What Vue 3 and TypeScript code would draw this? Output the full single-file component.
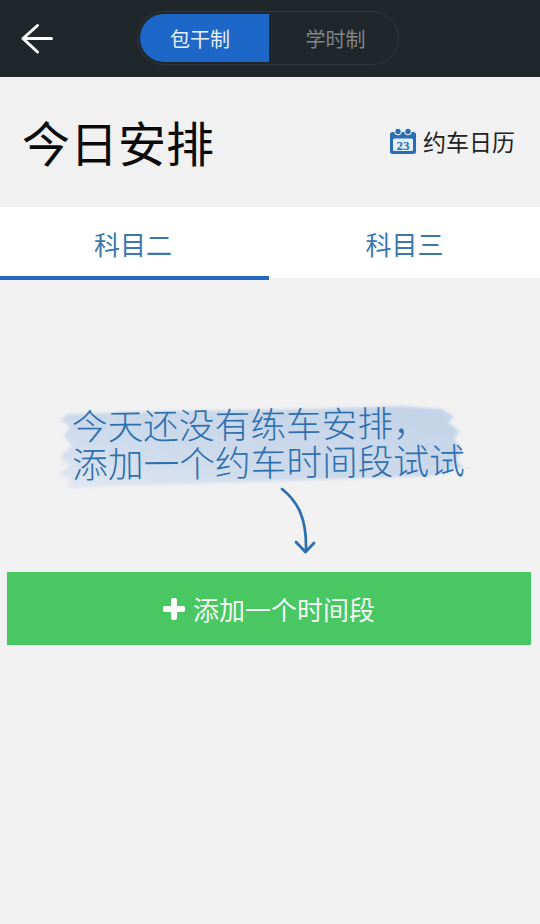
<script setup lang="ts">
import { ref } from 'vue'

const modes = ['包干制', '学时制']
const subjects = ['科目二', '科目三']
const activeMode = ref(0)
const activeSubject = ref(0)
</script>

<template>
  <div class="page">
    <header class="topbar">
      <button class="back" aria-label="返回">
        <svg width="34" height="34" viewBox="0 0 34 34" fill="none">
          <path d="M17.5 4.5 L3 17.5 L17.5 31 M3 17.5 H31.5" stroke="#fff" stroke-width="3" stroke-linecap="round" stroke-linejoin="round" />
        </svg>
      </button>
      <div class="switch">
        <button
          v-for="(m, i) in modes"
          :key="m"
          class="switch-item"
          :class="{ on: activeMode === i }"
          @click="activeMode = i"
        >{{ m }}</button>
      </div>
    </header>

    <section class="heading">
      <h1 class="title">今日安排</h1>
      <div class="calendar">
        <svg width="28" height="28" viewBox="0 0 28 28">
          <path d="M3.5 5 H24.5 a2.5 2.5 0 0 1 2.5 2.5 V24.5 a2.5 2.5 0 0 1 -2.5 2.5 H3.5 a2.5 2.5 0 0 1 -2.5 -2.5 V7.5 a2.5 2.5 0 0 1 2.5 -2.5 Z" fill="#2a6db2" />
          <rect x="4" y="11.5" width="20" height="12.5" rx="1.5" fill="#e6eff8" />
          <circle cx="9" cy="4.5" r="3.2" fill="#2a6db2" stroke="#eef3f8" stroke-width="1.1" />
          <circle cx="19" cy="4.5" r="3.2" fill="#2a6db2" stroke="#eef3f8" stroke-width="1.1" />
          <text x="14" y="22.6" text-anchor="middle" class="cal-num">23</text>
        </svg>
        <span>约车日历</span>
      </div>
    </section>

    <nav class="tabs">
      <button
        v-for="(s, i) in subjects"
        :key="s"
        class="tab"
        :class="{ on: activeSubject === i }"
        @click="activeSubject = i"
      >{{ s }}</button>
    </nav>

    <main class="empty">
      <div class="hint">
        <svg class="brush" width="430" height="92" viewBox="0 0 430 92">
          <defs>
            <filter id="soft" x="-5%" y="-15%" width="110%" height="130%">
              <feGaussianBlur stdDeviation="1.8" />
            </filter>
            <linearGradient id="wash" x1="1" y1="0" x2="0" y2="1">
              <stop offset="0" stop-color="#c3d3e7" />
              <stop offset="0.6" stop-color="#ccdaeb" />
              <stop offset="1" stop-color="#dfe7f1" />
            </linearGradient>
          </defs>
          <g filter="url(#soft)" fill="url(#wash)">
            <path d="M18 12 L120 9 L260 7 L350 4 L392 7 L404 15 L398 20 L410 30 L404 36 L412 48 L407 58 L413 66 L380 74 L200 80 L60 84 L16 86 L22 78 L9 72 L20 64 L10 54 L22 44 L14 34 L20 24 L10 18 Z" />
          </g>
          <path d="M8 20 H30 M10 62 H28 M398 66 H420" stroke="#dde5ef" stroke-width="1" fill="none" />
        </svg>
        <p class="hint-text">今天还没有练车安排，<br />添加一个约车时间段试试</p>
        <svg class="arrow" width="40" height="70" viewBox="0 0 40 70" fill="none">
          <path d="M3 2 C18 14 28 30 27 64" stroke="#2f6fae" stroke-width="2.8" stroke-linecap="round" />
          <path d="M17 55 L26.5 65 L35 56" stroke="#2f6fae" stroke-width="2.8" stroke-linecap="round" stroke-linejoin="round" />
        </svg>
      </div>
      <button class="add">
        <svg width="22" height="22" viewBox="0 0 22 22">
          <path d="M11 2.5 V19.5 M2.5 11 H19.5" stroke="#fff" stroke-width="6" stroke-linecap="round" />
        </svg>
        <span>添加一个时间段</span>
      </button>
    </main>
  </div>
</template>

<style>
html, body { margin: 0; background: #f1f1f1; }
</style>

<style scoped>
.page {
  width: 540px;
  height: 924px;
  overflow: hidden;
  display: flex;
  flex-direction: column;
  background: #f1f1f1;
  font-family: "Noto Sans CJK SC", "Noto Sans", sans-serif;
}
button {
  border: 0;
  padding: 0;
  background: none;
  font: inherit;
  cursor: pointer;
}
.topbar {
  height: 77px;
  flex: none;
  display: flex;
  align-items: center;
  background: #20272b;
  padding: 0 0 1px 20px;
  box-sizing: border-box;
}
.back {
  width: 34px;
  height: 34px;
  display: block;
  margin-right: 83px;
}
.switch {
  width: 262px;
  height: 54px;
  box-sizing: border-box;
  padding: 2px;
  display: flex;
  border: 1px solid #31383d;
  border-radius: 27px;
}
.switch-item {
  flex: 0 0 129px;
  height: 100%;
  color: #80868a;
  font-size: 20px;
  border-radius: 0 24px 24px 0;
}
.switch-item:last-child { flex: 1; padding-left: 6px; }
.switch-item.on {
  background: #1c67c8;
  color: #e8f1fb;
  border-radius: 24px 0 0 24px;
  padding-right: 9px;
}
.heading {
  height: 130px;
  flex: none;
  display: flex;
  align-items: center;
  justify-content: space-between;
  box-sizing: border-box;
  padding: 0 25px 3px 22px;
}
.title {
  margin: 0;
  font-size: 48px;
  font-weight: 400;
  color: #0a0a0a;
  line-height: 1;
}
.calendar {
  display: flex;
  align-items: center;
  gap: 6px;
  font-size: 23px;
  color: #222;
}
.cal-num {
  font-family: "Liberation Serif", serif;
  font-size: 13px;
  font-weight: 700;
  fill: #2a6db2;
}
.tabs {
  height: 73px;
  flex: none;
  display: grid;
  grid-template-columns: 269px 1fr;
  background: #fff;
}
.tab {
  box-sizing: border-box;
  color: #3b78b0;
  font-size: 26px;
  padding-top: 4px;
  border-bottom: 4px solid transparent;
}
.tab:first-child { padding-right: 3px; }
.tab.on { border-bottom-color: #2268bd; }
.tab:not(.on) { border-bottom: 2px solid #f1f1f1; padding-bottom: 2px; }
.empty {
  flex: 1;
  display: flex;
  flex-direction: column;
}
.hint {
  position: relative;
  height: 292px;
  box-sizing: border-box;
  padding: 126px 0 0 72px;
}
.brush {
  position: absolute;
  left: 50px;
  top: 122px;
}
.hint-text {
  position: relative;
  margin: 0;
  font-size: 35.7px;
  font-weight: 300;
  line-height: 38px;
  color: #2f6fae;
  white-space: nowrap;
  transform: rotate(-0.6deg);
  transform-origin: left center;
}
.arrow {
  position: absolute;
  left: 279px;
  top: 207px;
}
.add {
  margin: 0 9px 0 7px;
  height: 73px;
  flex: none;
  display: flex;
  align-items: center;
  justify-content: center;
  gap: 8px;
  background: #48c763;
  color: #f2fbf4;
  font-size: 26px;
}
</style>
